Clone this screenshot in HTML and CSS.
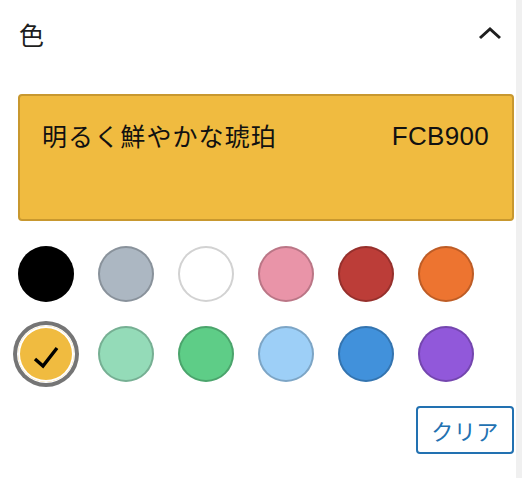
FILE: index.html
```html
<!DOCTYPE html>
<html lang="ja">
<head>
<meta charset="utf-8">
<link rel="stylesheet" href="styles.css">
</head>
<body>
<div class="frame">
  <div class="panel">
    <div class="panel-header">
      <h2 class="panel-title">色</h2>
      <svg class="chevron" width="24" height="14" viewBox="0 0 24 14"><path d="M2 12 L12 3 L22 12" fill="none" stroke="#1e1e1e" stroke-width="3"/></svg>
    </div>
    <div class="color-preview">
      <span class="color-name">明るく鮮やかな琥珀</span>
      <span class="color-hex">FCB900</span>
    </div>
    <div class="swatches">
      <span class="swatch s-black"></span>
      <span class="swatch s-gray"></span>
      <span class="swatch s-white"></span>
      <span class="swatch s-pink"></span>
      <span class="swatch s-red"></span>
      <span class="swatch s-orange"></span>
      <span class="swatch s-amber selected">
        <svg class="check" width="30" height="30" viewBox="0 0 30 30"><path d="M4 20 L12 27 L26 9" fill="none" stroke="#000" stroke-width="3.4"/></svg>
      </span>
      <span class="swatch s-lgreen"></span>
      <span class="swatch s-green"></span>
      <span class="swatch s-lblue"></span>
      <span class="swatch s-blue"></span>
      <span class="swatch s-purple"></span>
    </div>
    <div class="actions">
      <button class="clear-btn">クリア</button>
    </div>
  </div>
  <div class="scroll-edge"></div>
</div>
</body>
</html>
```

FILE: styles.css
```css
html, body {
  margin: 0;
  padding: 0;
  background: #fff;
}
body {
  font-family: "Liberation Sans", "Noto Sans CJK JP", sans-serif;
  color: #1e1e1e;
}
.frame {
  display: flex;
  width: 522px;
  height: 478px;
  overflow: hidden;
}
.panel {
  width: 496px;
  padding: 0 0 0 18px;
  flex: none;
}
.scroll-edge {
  margin-left: 2px;
  width: 6px;
  background: #f0f0f0;
  border-right: 1px solid #e6e6e6;
  flex: none;
}
.panel-header {
  display: flex;
  align-items: center;
  justify-content: space-between;
  height: 72px;
  margin-bottom: 22px;
}
.panel-title {
  margin: -4px 0 0 1px;
  font-family: "Noto Sans CJK JP", sans-serif;
  font-weight: 400;
  font-size: 25px;
  line-height: 1;
  color: #1e1e1e;
}
.chevron {
  margin-right: 12px;
  margin-top: -6px;
}
.color-preview {
  box-sizing: border-box;
  height: 127px;
  background: #f0bb40;
  border: 2px solid #c8982f;
  border-radius: 4px;
  display: flex;
  justify-content: space-between;
  align-items: flex-start;
  padding: 21px 23px 0 22px;
  color: #111;
}
.color-name {
  font-family: "Noto Sans CJK JP", sans-serif;
  font-size: 25px;
  letter-spacing: 1.1px;
  line-height: 36px;
}
.color-hex {
  font-family: "Liberation Sans", sans-serif;
  font-size: 26px;
  line-height: 36px;
  letter-spacing: 0.3px;
  margin-top: 1px;
}
.swatches {
  display: grid;
  grid-template-columns: repeat(6, 56px);
  column-gap: 24px;
  row-gap: 24px;
  margin-top: 25px;
}
.swatch {
  width: 56px;
  height: 56px;
  border-radius: 50%;
  box-sizing: border-box;
  display: flex;
  align-items: center;
  justify-content: center;
  box-shadow: inset 0 0 0 2px rgba(0,0,0,0.2);
}
.s-black { background: #000; }
.s-gray { background: #acb7c2; }
.s-white { background: #fff; box-shadow: inset 0 0 0 2px #d2d2d2; }
.s-pink { background: #e994a8; }
.s-red { background: #bc3d38; }
.s-orange { background: #ed7430; }
.s-amber { background: #f0bb40; }
.s-lgreen { background: #94dbb8; }
.s-green { background: #5ecd87; }
.s-lblue { background: #9dcff7; }
.s-blue { background: #4191db; }
.s-purple { background: #9158da; }
.swatch.selected {
  box-shadow: inset 0 0 0 2px #fff, 0 0 0 1px #fff, 0 0 0 5px #757575;
}
.actions {
  display: flex;
  justify-content: flex-end;
  margin-top: 24px;
}
.clear-btn {
  box-sizing: border-box;
  height: 48px;
  width: 98px;
  background: #fff;
  border: 2px solid #2271b1;
  border-radius: 4px;
  color: #2271b1;
  font-family: "Noto Sans CJK JP", sans-serif;
  font-size: 22px;
  padding: 0;
  letter-spacing: 0.5px;
}
```
